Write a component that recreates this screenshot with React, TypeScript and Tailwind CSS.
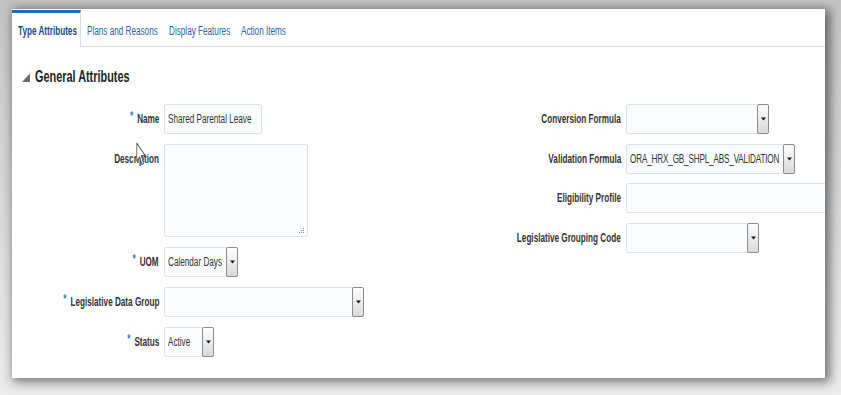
import type { ReactNode } from 'react';

const font = "font-['Liberation_Sans',Arial,sans-serif]";

// the screen is narrow-set: every text is drawn squeezed to about 68% width
function Squeeze({
  children,
  right,
  className = '',
}: {
  children: ReactNode;
  right?: boolean;
  className?: string;
}) {
  return (
    <span
      className={`inline-block scale-x-[0.68] whitespace-nowrap ${right ? 'origin-right' : 'origin-left'} ${className}`}
    >
      {children}
    </span>
  );
}

function Caret() {
  return (
    <svg width="5" height="4" viewBox="0 0 5 4">
      <path d="M0 0.5h5L2.5 3.5z" fill="#111" />
    </svg>
  );
}

function Label({ text, required }: { text: string; required?: boolean }) {
  return (
    <div className="flex h-[30px] items-center justify-end self-start overflow-visible">
      <Squeeze right className="text-[12px] font-bold leading-none text-[#333333]">
        {required && (
          <span className="relative -top-[3px] mr-[6px] text-[12px] text-[#2f78c8]">*</span>
        )}
        {text}
      </Squeeze>
    </div>
  );
}

function Select({
  value,
  className,
  tight,
}: {
  value?: string;
  className: string;
  tight?: boolean;
}) {
  return (
    <div
      className={`flex h-[30px] items-stretch rounded-[2px] border border-[#dce2e8] bg-[#fbfcfd] ${className}`}
    >
      <span className="flex flex-1 items-center overflow-hidden pl-[3px]">
        <Squeeze
          className={`text-[12px] leading-none text-[#333333] ${tight ? 'tracking-[-0.25px]' : ''}`}
        >
          {value}
        </Squeeze>
      </span>
      <span className="-my-px -mr-px flex w-[12px] shrink-0 items-center justify-center rounded-[2px] border border-[#8c8c8c] bg-linear-to-b from-white to-[#d9d9d9]">
        <Caret />
      </span>
    </div>
  );
}

function TextBox({ value, className }: { value?: string; className: string }) {
  return (
    <div
      className={`flex h-[30px] items-center overflow-hidden rounded-[2px] border border-[#dce2e8] bg-[#fbfcfd] pl-[3px] ${className}`}
    >
      <Squeeze className="text-[12px] leading-none text-[#333333]">{value}</Squeeze>
    </div>
  );
}

function Cursor() {
  return (
    <svg
      className="absolute left-[124px] top-[133px]"
      width="10"
      height="25"
      viewBox="0 0 12 21"
      preserveAspectRatio="none"
    >
      <path
        d="M1 1 L1 16 L4.5 12.5 L7 19 L9 18 L6.5 11.5 L11 11.5 Z"
        fill="white"
        stroke="#444"
        strokeWidth="0.9"
        strokeLinejoin="round"
      />
    </svg>
  );
}

export default function App() {
  return (
    <div
      className={`h-[395px] w-[841px] overflow-hidden bg-linear-to-b from-[#c4c4c4] to-[#ececec] pl-[12px] pt-[9px] ${font}`}
    >
      <div className="relative h-[369px] w-[813px] overflow-hidden bg-white shadow-[3px_2px_10px_2px_rgba(0,0,0,0.5)]">
        <div className="flex h-[38px] border-b border-[#d6dee7] pt-px">
          <div className="-mb-px flex items-center border-r border-t-[3px] border-r-[#d6dee7] border-t-[#1d6ad0] bg-white pl-[6px] pr-[4px]">
            <span className="w-[58px]">
              <Squeeze className="text-[12px] font-bold text-[#1b4a8a]">Type Attributes</Squeeze>
            </span>
          </div>
          <div className="flex items-center px-[6px] pt-[3px]">
            <span className="w-[70px]">
              <Squeeze className="text-[12px] text-[#2b62ad]">Plans and Reasons</Squeeze>
            </span>
          </div>
          <div className="flex items-center px-[6px] pt-[3px]">
            <span className="w-[60px]">
              <Squeeze className="text-[12px] text-[#2b62ad]">Display Features</Squeeze>
            </span>
          </div>
          <div className="flex items-center px-[6px] pt-[3px]">
            <span className="w-[43px]">
              <Squeeze className="text-[12px] text-[#2b62ad]">Action Items</Squeeze>
            </span>
          </div>
        </div>

        <div className="mt-[20px] flex h-[20px] items-center gap-[5px] pl-[10px]">
          <svg width="8" height="9" viewBox="0 0 8 9">
            <path d="M8 0.5 L8 9 L0 9 Z" fill="#6b6b6b" />
          </svg>
          <h2 className="leading-none">
            <Squeeze className="text-[16px] font-bold text-[#222222]">General Attributes</Squeeze>
          </h2>
        </div>

        <div className="mt-[17px] flex">
          <div className="grid w-[400px] shrink-0 grid-cols-[147px_auto] content-start gap-x-[5px] gap-y-[10px]">
            <Label text="Name" required />
            <TextBox value="Shared Parental Leave" className="w-[98px]" />

            <Label text="Description" />
            <div className="relative h-[93px] w-[144px] rounded-[2px] border border-[#dce2e8] bg-[#fbfcfd]">
              <svg className="absolute bottom-[2px] right-[2px]" width="6" height="6" viewBox="0 0 6 6">
                <g fill="#8a8a8a">
                  <rect x="4" y="0" width="1" height="1" />
                  <rect x="2" y="2" width="1" height="1" />
                  <rect x="4" y="2" width="1" height="1" />
                  <rect x="0" y="4" width="1" height="1" />
                  <rect x="2" y="4" width="1" height="1" />
                  <rect x="4" y="4" width="1" height="1" />
                </g>
              </svg>
            </div>

            <Label text="UOM" required />
            <Select value="Calendar Days" className="w-[74px]" />

            <Label text="Legislative Data Group" required />
            <Select className="w-[200px]" />

            <Label text="Status" required />
            <Select value="Active" className="w-[50px]" />
          </div>

          <div className="grid shrink-0 grid-cols-[209px_auto] content-start gap-x-[5px] gap-y-[9.5px]">
            <Label text="Conversion Formula" />
            <Select className="w-[143px]" />

            <Label text="Validation Formula" />
            <Select value="ORA_HRX_GB_SHPL_ABS_VALIDATION" className="w-[169px]" tight />

            <Label text="Eligibility Profile" />
            <TextBox className="w-[220px]" />

            <Label text="Legislative Grouping Code" />
            <Select className="w-[133px]" />
          </div>
        </div>

        <Cursor />
      </div>
    </div>
  );
}
